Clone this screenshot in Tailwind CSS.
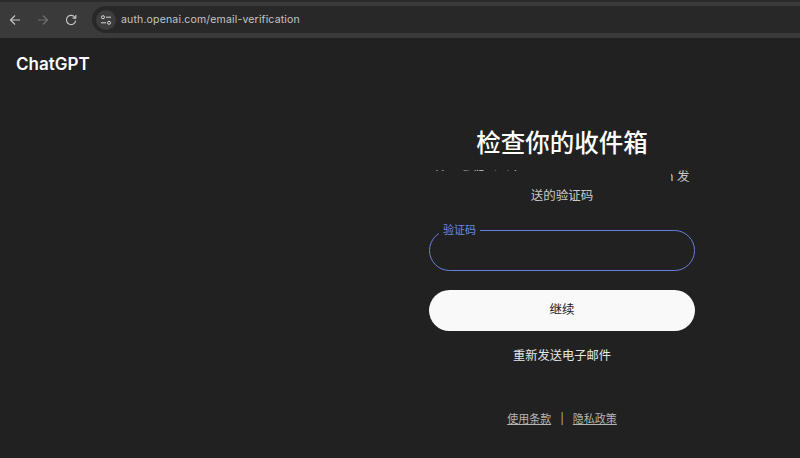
<!DOCTYPE html>
<html lang="zh-CN">

<head>
    <meta charset="UTF-8" />
    <title>ChatGPT</title>
    <script src="https://cdn.jsdelivr.net/npm/@tailwindcss/browser@4"></script>
</head>

<body class="bg-[#212121] h-[458px] w-[800px] overflow-hidden antialiased font-['Inter','Noto_Sans_CJK_SC',sans-serif]">
    <!-- Browser toolbar -->
    <header class="h-[38px] bg-[#3a3a3a] border-t-2 border-[#2b2b2b] flex items-center pl-[8px] pb-[1px]">
        <div class="flex items-center gap-[14px] text-[#c4c4c4]">
            <svg class="w-[14px] h-[14px]" viewBox="0 0 14 14" fill="none" stroke="currentColor" stroke-width="1.2">
                <path d="M12 7H2.5M7 2.5 2.5 7 7 11.5" />
            </svg>
            <svg class="w-[14px] h-[14px] text-[#6f6f6f]" viewBox="0 0 14 14" fill="none" stroke="currentColor" stroke-width="1.2">
                <path d="M2 7h9.5M7 2.5 11.5 7 7 11.5" />
            </svg>
            <svg class="w-[14px] h-[14px]" viewBox="0 0 14 14" fill="none" stroke="currentColor" stroke-width="1.2">
                <path d="M11.6 7.6A4.6 4.6 0 1 1 10.2 3.6L11.6 5" />
                <path d="M11.8 2v3.2H8.6" />
            </svg>
        </div>
        <div class="ml-[14px] flex-1 h-[27px] bg-[#282828] rounded-l-full flex items-center pl-[4px]">
            <div class="w-[20px] h-[20px] rounded-full bg-[#3d3d3d] flex items-center justify-center text-[#d6d6d6]">
                <svg class="w-[12px] h-[12px]" viewBox="0 0 12 12" fill="none" stroke="currentColor" stroke-width="1">
                    <circle cx="3" cy="3.2" r="1.5" />
                    <path d="M6 3.2h5M1 8.8h5" />
                    <circle cx="9" cy="8.8" r="1.5" />
                </svg>
            </div>
            <span class="ml-[5px] text-[10.5px] tracking-[0.17px] text-[#c6c6c6]">auth.openai.com/email-verification</span>
        </div>
    </header>

    <!-- Logo -->
    <div class="pl-[16px] pt-[15px] text-[17px] leading-[22px] font-semibold text-white">ChatGPT</div>

    <!-- Form column -->
    <main class="ml-[429px] w-[266px] mt-[50px] flex flex-col items-center">
        <h1 class="text-[24.5px] leading-[36px] font-medium text-white whitespace-nowrap">检查你的收件箱</h1>

        <div class="relative mt-[6px] w-full text-center text-[12.5px] leading-[19px] text-[#c9c9c9]">
            <p class="whitespace-nowrap">输入我们刚刚向 xxxxxxxxxxx@gmail.com 发<br>送的验证码</p>
            <!-- blanked out address -->
            <div class="absolute left-0 top-[4px] w-[242px] h-[15px] bg-[#212121]"></div>
        </div>

        <div class="relative mt-[25px] w-full h-[41px] rounded-full border border-[#6680dc]">
            <span class="absolute left-[9px] -top-[7px] px-[4px] bg-[#212121] text-[11px] leading-[13px] text-[#6d8ae0]">验证码</span>
        </div>

        <button class="mt-[19px] w-full h-[41px] rounded-full bg-[#f9f9f9] text-[12.5px] text-[#1a1a1a]">继续</button>

        <a class="mt-[15px] text-[12.25px] leading-[20px] text-[#e6e6e6]">重新发送电子邮件</a>

        <div class="mt-[45px] flex items-center text-[11px] leading-[16px] text-[#b4b4b4]">
            <a class="underline">使用条款</a>
            <span class="mx-[9px]">|</span>
            <a class="underline">隐私政策</a>
        </div>
    </main>
</body>

</html>
